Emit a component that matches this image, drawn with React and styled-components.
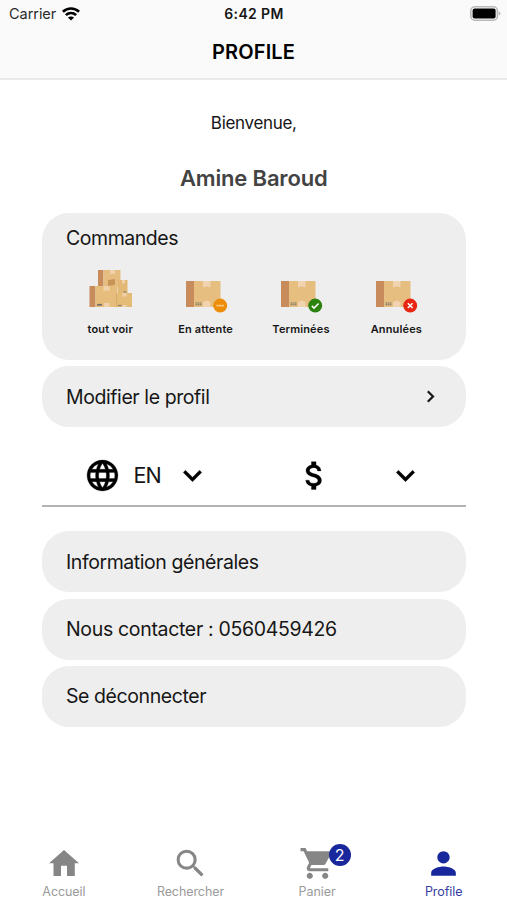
import React from 'react';
import styled, { createGlobalStyle } from 'styled-components';
import {
  MdAttachMoney,
  MdKeyboardArrowDown,
  MdKeyboardArrowRight,
  MdLanguage,
  MdPerson,
  MdSearch,
  MdShoppingCart,
} from 'react-icons/md';

const GlobalStyle = createGlobalStyle`
  * {
    box-sizing: border-box;
  }

  body {
    margin: 0;
    background-color: #ffffff;
    font-family: Inter, "Liberation Sans", sans-serif;
    color: #161616;
  }
`;

const Screen = styled.div`
  display: flex;
  flex-direction: column;
  width: 507px;
  height: 900px;
  overflow: hidden;
`;

const Header = styled.header`
  height: 80px;
  background-color: #fafafa;
  border-bottom: 2px solid #e9e9e9;
`;

const StatusBar = styled.div`
  display: grid;
  grid-template-columns: 1fr auto 1fr;
  align-items: center;
  height: 27px;
  padding: 0 6px 0 9px;
`;

const Carrier = styled.div`
  display: flex;
  align-items: center;
  gap: 6px;
  font-size: 14.5px;
  line-height: 20px;
  letter-spacing: -0.05px;
  color: #2b2b2b;
`;

const Clock = styled.div`
  font-size: 14px;
  font-weight: 600;
  line-height: 20px;
  letter-spacing: 0.35px;
  margin-right: 2px;
`;

const BatterySlot = styled.div`
  display: flex;
  justify-content: flex-end;
`;

const Title = styled.h1`
  margin: 12px 0 0;
  font-size: 20px;
  font-weight: 600;
  line-height: 27px;
  letter-spacing: 0.15px;
  text-align: center;
  color: #000000;
`;

const Content = styled.main`
  flex: 1;
  padding: 31px 41px 0 41.5px;
`;

const Welcome = styled.p`
  margin: 0;
  font-size: 17px;
  line-height: 25px;
  letter-spacing: -0.32px;
  text-align: center;
`;

const UserName = styled.h2`
  margin: 28px 0 21px;
  font-size: 22px;
  font-weight: 600;
  line-height: 28px;
  letter-spacing: -0.17px;
  text-align: center;
  color: #434343;
`;

const Card = styled.section`
  height: 147px;
  padding: 11px 22px 0;
  border-radius: 27px;
  background-color: #eeeeee;
`;

const CardTitle = styled.h3`
  margin: 0 0 0 2.5px;
  font-size: 19.5px;
  font-weight: 400;
  line-height: 28px;
  letter-spacing: -0.45px;
`;

const Orders = styled.div`
  display: grid;
  grid-template-columns: repeat(4, 95.4px);
  margin: 16px 0 0 -0.5px;
`;

const Order = styled.div`
  display: flex;
  flex-direction: column;
  align-items: center;
  margin-left: -1px;
`;

const OrderLabel = styled.span`
  margin-top: 7px;
  font-size: 11px;
  font-weight: 600;
  line-height: 16px;
  letter-spacing: 0.15px;
  white-space: nowrap;
`;

const Row = styled.div`
  display: flex;
  align-items: center;
  justify-content: space-between;
  height: 61px;
  margin-top: 6.3px;
  padding: 0 24px 0 24.5px;
  border-radius: 27px;
  background-color: #eeeeee;
  font-size: 19.5px;
  line-height: 28px;
  letter-spacing: ${(props) => props.$spacing || '-0.42px'};

  path:not([fill='none']) {
    stroke: currentColor;
    stroke-width: 0.4px;
  }
`;

const Preferences = styled.div`
  display: grid;
  grid-template-columns: 212px 1fr;
  height: 80px;
  margin-bottom: 24px;
  border-bottom: 2.5px solid #b4b4b4;
`;

const Preference = styled.div`
  display: flex;
  align-items: center;
  justify-content: ${(props) => (props.$spread ? 'space-between' : 'flex-start')};
  padding: ${(props) => (props.$spread ? '19px 42.5px 0 42px' : '19px 0 0 42px')};

  svg {
    flex: none;
    color: #000000;
  }

  path:not([fill='none']) {
    stroke: currentColor;
    stroke-width: 0.2px;
  }
`;

const Language = styled.span`
  width: 32px;
  margin: 0 8px 1px 13px;
  font-size: 21.5px;
  line-height: 28px;
  letter-spacing: -0.9px;
`;

const TabBar = styled.nav`
  display: grid;
  grid-template-columns: repeat(4, 126.6px);
  height: 60px;
  padding-left: 0.6px;
`;

const Tab = styled.div`
  display: flex;
  flex-direction: column;
  align-items: center;
  padding-top: 5px;
  color: ${(props) => (props.$active ? '#18279b' : '#868686')};
`;

const TabIcon = styled.div`
  position: relative;
  display: flex;
  height: 37px;
`;

const TabLabel = styled.span`
  margin-top: 2px;
  font-size: 12.5px;
  line-height: 16px;
  letter-spacing: -0.08px;
  color: ${(props) => (props.$active ? '#3540a5' : '#9b9b9b')};
`;

const Badge = styled.span`
  position: absolute;
  top: -1px;
  left: 30px;
  width: 22px;
  height: 22px;
  border-radius: 50%;
  background-color: #18279b;
  color: #ffffff;
  font-size: 16px;
  line-height: 22px;
  text-align: center;
`;

function WifiIcon() {
  return (
    <svg width="18" height="14" viewBox="0 0 18 14" fill="none" stroke="#000" strokeWidth="2.7">
      <path d="M0.9 4.8 C5.5 0.4 12.5 0.4 17.1 4.8" />
      <path d="M3.9 8.1 C6.8 5.3 11.2 5.3 14.1 8.1" />
      <path d="M9 13.6 L5.9 10.5 C7.7 9 10.3 9 12.1 10.5 Z" fill="#000" stroke="none" />
    </svg>
  );
}

function BatteryIcon() {
  return (
    <svg width="31" height="15" viewBox="0 0 31 15">
      <rect x="0.8" y="0.8" width="26.6" height="13.4" rx="4" fill="#fafafa" stroke="#b9b9b9" strokeWidth="1.6" />
      <rect x="2.6" y="2.5" width="23" height="10" rx="2" fill="#000" />
      <path d="M28.7 5.3 Q30.5 6 30.5 7.5 Q30.5 9 28.7 9.7 Z" fill="#b9b9b9" />
    </svg>
  );
}

function HomeIcon() {
  return (
    <svg width="36" height="37" viewBox="0 0 36 37" fill="currentColor">
      <path d="M18 5 L33 18.3 H28.8 V31 H21 V20.8 H15 V31 H7.5 V18.3 H3 Z" />
    </svg>
  );
}

function StackIcon() {
  return (
    <svg width="44" height="46" viewBox="0 0 44 46">
      <rect x="10" y="2" width="5.5" height="17" fill="#c78b5c" />
      <rect x="15.5" y="2" width="17" height="17" fill="#e5bd81" />
      <path d="M22 2h5v4.5l-2.5-1L22 6.5z" fill="#f0d1ac" />
      <rect x="30" y="12" width="9.5" height="14" fill="#e3b774" />
      <path d="M34 12h3v3.5h-3z" fill="#f0d1ac" />
      <path d="M20 12l7-1v6l-7 1z" fill="#c89558" />
      <rect x="1.5" y="18" width="6" height="21" fill="#c78b5c" />
      <rect x="7.5" y="18" width="22" height="21" fill="#e6bd7d" />
      <path d="M15.5 18h6v5.5l-3-1.5-3 1.5zM16 35h5.5v4H16z" fill="#f0d1ac" />
      <path d="M9 36.8h5" stroke="#77736a" strokeWidth="1.8" />
      <path d="M35.5 24h3" stroke="#8f816a" strokeWidth="1.2" />
      <rect x="28.5" y="25" width="15.5" height="14" fill="#e5bb78" />
      <path d="M28.5 25v14" stroke="#d3a465" strokeWidth="0.7" />
      <path d="M34.5 25h4v3.5h-4zM34.5 37h4v2h-4z" fill="#f0d1ac" />
      <path d="M30 37.5h3.5" stroke="#8f816a" strokeWidth="1.3" />
    </svg>
  );
}

const STATUS_COLORS = {
  pending: '#ed8d09',
  done: '#2c820f',
  cancelled: '#e72713',
};

function PackageIcon({ status }) {
  return (
    <svg width="44" height="46" viewBox="0 0 44 46">
      <rect x="2" y="13" width="8" height="26" fill="#c78b5c" />
      <rect x="10" y="13" width="26.5" height="26" fill="#e5be80" />
      <path d="M19 13h7.5v6.5l-3.7-1.3-3.8 1.3z" fill="#f1d3b0" />
      <path d="M19 34l4-1.5 3.5 1.5v5H19z" fill="#f1d3b0" />
      <path d="M11.5 35h6.5M11.5 36.8h6.5" stroke="#77736a" strokeWidth="1.1" strokeDasharray="1.6 0.5" />
      <circle cx="36.2" cy="37.6" r="7" fill={STATUS_COLORS[status]} />
      {status === 'pending' && <path d="M32.5 37.6h7.4" stroke="#f8cf86" strokeWidth="1.8" strokeDasharray="2.2 0.4" />}
      {status === 'done' && <path d="M32.8 37.9l2.2 2.2 4.6-4.7" fill="none" stroke="#fff" strokeWidth="1.5" />}
      {status === 'cancelled' && <path d="M33.8 35.2l4.8 4.8M38.6 35.2l-4.8 4.8" stroke="#fff" strokeWidth="1.5" />}
    </svg>
  );
}

function App() {
  return (
    <Screen>
      <GlobalStyle />
      <Header>
        <StatusBar>
          <Carrier>
            Carrier
            <WifiIcon />
          </Carrier>
          <Clock>6:42 PM</Clock>
          <BatterySlot>
            <BatteryIcon />
          </BatterySlot>
        </StatusBar>
        <Title>PROFILE</Title>
      </Header>

      <Content>
        <Welcome>Bienvenue,</Welcome>
        <UserName>Amine Baroud</UserName>

        <Card>
          <CardTitle>Commandes</CardTitle>
          <Orders>
            <Order>
              <StackIcon />
              <OrderLabel>tout voir</OrderLabel>
            </Order>
            <Order>
              <PackageIcon status="pending" />
              <OrderLabel>En attente</OrderLabel>
            </Order>
            <Order>
              <PackageIcon status="done" />
              <OrderLabel>Terminées</OrderLabel>
            </Order>
            <Order>
              <PackageIcon status="cancelled" />
              <OrderLabel>Annulées</OrderLabel>
            </Order>
          </Orders>
        </Card>
        <Row>
          Modifier le profil
          <MdKeyboardArrowRight size={23} />
        </Row>

        <Preferences>
          <Preference>
            <MdLanguage size={37} />
            <Language>EN</Language>
            <MdKeyboardArrowDown size={37} />
          </Preference>
          <Preference $spread>
            <MdAttachMoney size={37} />
            <MdKeyboardArrowDown size={37} />
          </Preference>
        </Preferences>

        <Row>Information générales</Row>
        <Row $spacing="-0.33px">Nous contacter : 0560459426</Row>
        <Row>Se déconnecter</Row>
      </Content>

      <TabBar>
        <Tab>
          <TabIcon>
            <HomeIcon />
          </TabIcon>
          <TabLabel>Accueil</TabLabel>
        </Tab>
        <Tab>
          <TabIcon>
            <MdSearch size={37} />
          </TabIcon>
          <TabLabel>Rechercher</TabLabel>
        </Tab>
        <Tab>
          <TabIcon>
            <MdShoppingCart size={37} />
            <Badge>2</Badge>
          </TabIcon>
          <TabLabel>Panier</TabLabel>
        </Tab>
        <Tab $active>
          <TabIcon>
            <MdPerson size={37} />
          </TabIcon>
          <TabLabel $active>Profile</TabLabel>
        </Tab>
      </TabBar>
    </Screen>
  );
}

export default App;
